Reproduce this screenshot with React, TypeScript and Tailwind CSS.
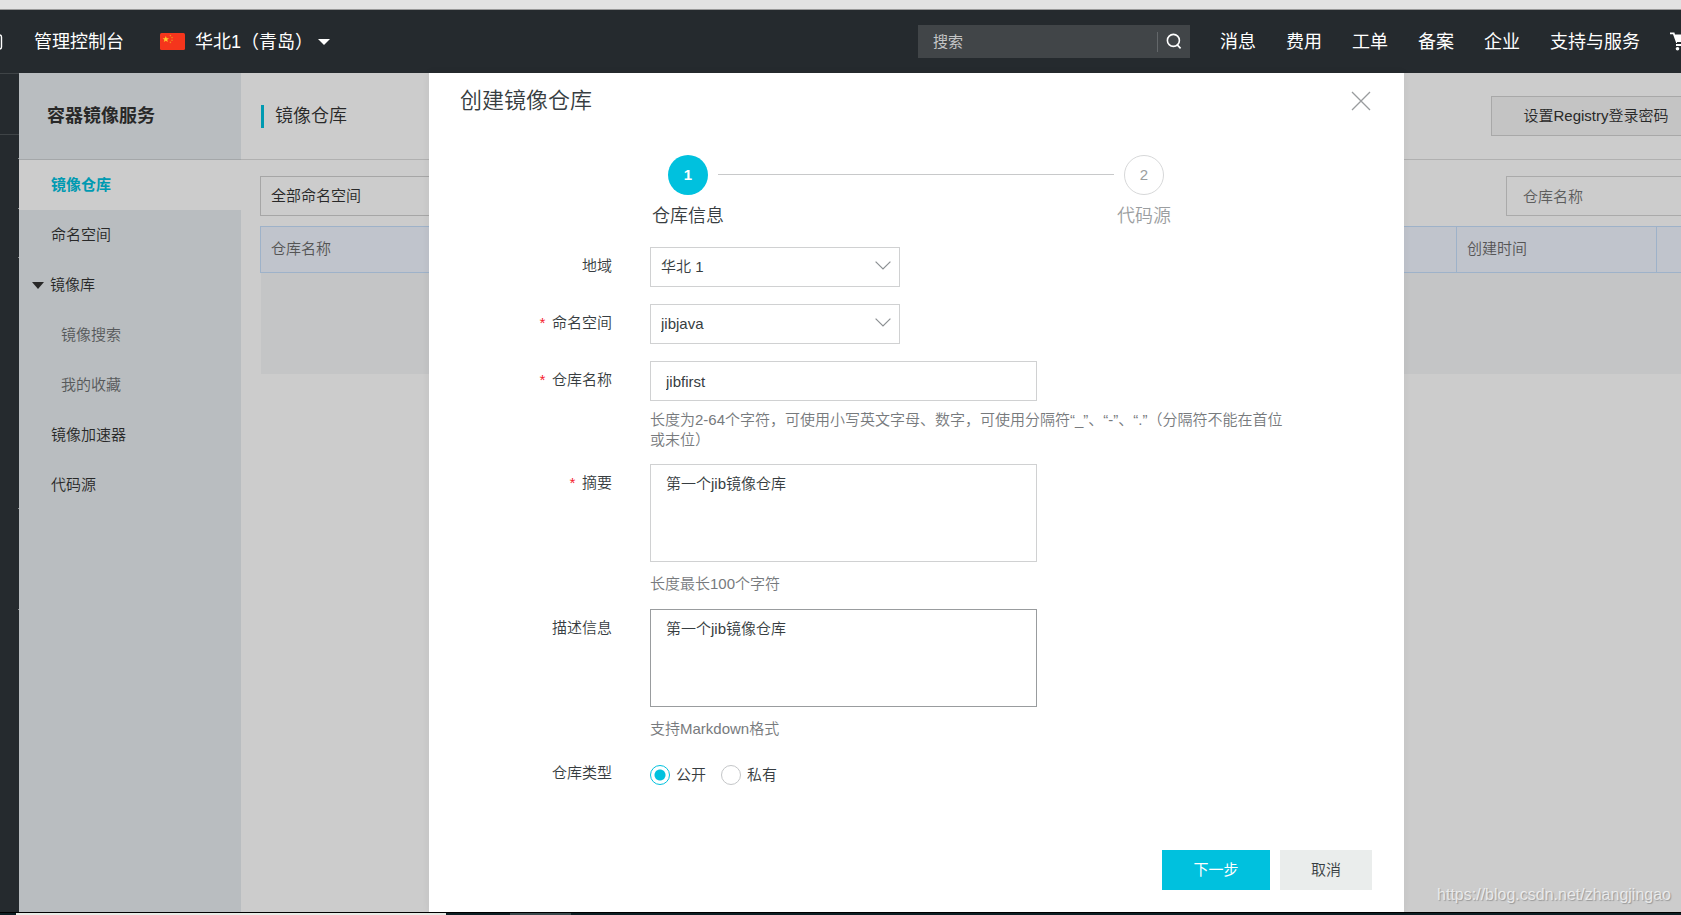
import { useState } from 'react';
import type { ReactNode } from 'react';
import clsx from 'clsx';

const NAV_LINKS = ['消息', '费用', '工单', '备案', '企业', '支持与服务'];

const MENU = [
  { label: '镜像仓库', kind: 'active' },
  { label: '命名空间', kind: 'item' },
  { label: '镜像库', kind: 'group' },
  { label: '镜像搜索', kind: 'sub' },
  { label: '我的收藏', kind: 'sub' },
  { label: '镜像加速器', kind: 'item' },
  { label: '代码源', kind: 'item' },
];

// Heights of the collapsed product rail cells
const RAIL_CELLS = ['h-6', 'h-[50px]', 'h-[49px]', 'h-[251px]', 'h-[101px]'];

function ChinaFlag() {
  return (
    <svg width="25" height="17" viewBox="0 0 25 17" aria-hidden="true">
      <rect width="25" height="17" rx="1.5" fill="#f5351c" />
      <path d="M5.8 3l.9 2.2 2.3.1-1.8 1.5.6 2.3-2-1.3-2 1.3.6-2.3-1.8-1.5 2.3-.1z" fill="#fdc72e" />
      <g fill="#f08a1e">
        <circle cx="10.4" cy="2.6" r=".8" />
        <circle cx="12" cy="4.6" r=".8" />
        <circle cx="12" cy="7.2" r=".8" />
        <circle cx="10.4" cy="9.4" r=".8" />
      </g>
    </svg>
  );
}

function SearchIcon() {
  return (
    <svg width="16" height="17" viewBox="0 0 16 17" fill="none" stroke="#fff" strokeWidth="1.6" aria-hidden="true">
      <circle cx="7.4" cy="7.4" r="6" />
      <path d="M11 11.6l3.6 3.8" />
    </svg>
  );
}

function CartIcon() {
  return (
    <svg width="24" height="19" viewBox="0 0 24 19" aria-hidden="true">
      <path d="M0 .6h4.4L5 2.6h18l-3 8.4H6.2L3 2.2H0z" fill="#fff" />
      <path d="M7 10.5h13" stroke="#252a2e" />
      <path d="M6 13h14" stroke="#fff" strokeWidth="2" />
      <circle cx="7.5" cy="16.7" r="1.8" fill="#fff" />
      <circle cx="18" cy="16.7" r="1.8" fill="#fff" />
    </svg>
  );
}

function Chevron() {
  return (
    <svg
      width="16"
      height="9"
      viewBox="0 0 16 9"
      fill="none"
      stroke="#8c9093"
      strokeWidth="1.2"
      className="pointer-events-none col-start-1 row-start-1 mr-[9px] mb-1 self-center justify-self-end"
      aria-hidden="true"
    >
      <path d="M.6.6L8 8 15.4.6" />
    </svg>
  );
}

function Header() {
  return (
    <header className="overflow-hidden border-t border-[#999] bg-[#252a2e] text-white">
      <div className="flex h-[63px] w-[calc(100%+13px)] items-center text-lg leading-7 whitespace-nowrap">
        <svg width="34" height="16" viewBox="0 0 34 16" fill="none" stroke="#fff" aria-hidden="true">
          <rect x="-12" y="1" width="13.5" height="14" rx="2" strokeWidth="1.4" />
        </svg>
        <a href="#console">管理控制台</a>
        <button type="button" className="ml-9 flex items-center">
          <ChinaFlag />
          <span className="ml-[10px]">华北1（青岛）</span>
          <svg width="12" height="6" viewBox="0 0 12 6" className="ml-[5px]" aria-hidden="true">
            <path d="M0 0h12L6 6z" fill="#fff" />
          </svg>
        </button>
        <div className="ml-auto flex items-center gap-[30px]">
          <form className="flex h-[33px] w-[272px] items-center bg-[#414548]">
            <input
              type="text"
              aria-label="搜索"
              placeholder="搜索"
              className="h-full min-w-0 flex-1 bg-transparent pl-[15px] text-[15px] outline-none placeholder:text-[#c4c5c6]"
            />
            <button
              type="button"
              aria-label="搜索"
              className="flex h-5 w-[33px] items-center justify-center border-l border-[#63676a]"
            >
              <SearchIcon />
            </button>
          </form>
          {NAV_LINKS.map((link) => (
            <a key={link} href="#nav">
              {link}
            </a>
          ))}
          <a href="#cart" aria-label="购物车">
            <CartIcon />
          </a>
        </div>
      </div>
    </header>
  );
}

function Rail() {
  return (
    <div className="w-[19px] shrink-0 bg-[#252a2e]">
      <div className="h-[62px] border-y border-[#3f4447]" />
      {RAIL_CELLS.map((height, i) => (
        <div key={i} className={clsx('flex items-end justify-end', height)}>
          <span className="h-px w-px bg-[#8d9092]" />
        </div>
      ))}
    </div>
  );
}

function Sidebar() {
  return (
    <nav className="w-[222px] shrink-0 bg-[#e8edf0] text-[15px] font-[350]">
      <h1 className="h-[87px] border-b border-[#cdd1d4] pl-7 text-lg leading-[87px] font-bold text-[#333]">
        容器镜像服务
      </h1>
      <ul>
        {MENU.map(({ label, kind }) => (
          <li key={label}>
            <a
              href="#menu"
              className={clsx(
                'flex h-[50px] items-center',
                kind === 'active' && 'bg-white pl-8 font-bold text-[#00c1de]',
                kind === 'item' && 'pl-8 text-[#333]',
                kind === 'group' && 'pl-[13px] text-[#333]',
                kind === 'sub' && 'pl-[42px] text-[#6d7072]',
              )}
            >
              {kind === 'group' && (
                <svg width="12" height="7" viewBox="0 0 12 7" className="mr-[6px]" aria-hidden="true">
                  <path d="M0 0h12L6 7z" fill="#333" />
                </svg>
              )}
              {label}
            </a>
          </li>
        ))}
      </ul>
    </nav>
  );
}

function Repositories() {
  return (
    <main className="min-w-0 flex-1 overflow-hidden bg-white text-[15px] font-[350]">
      <div className="w-[calc(100%+40px)]">
        <div className="flex h-[87px] items-center border-b border-[#ddd] px-5">
          <h2 className="flex items-center text-lg leading-6 text-[#333]">
            <span className="mr-[11px] h-[23px] w-[3px] bg-[#00c1de]" />
            镜像仓库
          </h2>
          <button type="button" className="ml-auto h-10 w-[210px] border border-[#d3d3d3] bg-[#f5f5f5] text-[#333]">
            设置Registry登录密码
          </button>
        </div>
        <div className="px-[19px] pt-4">
          <div className="flex justify-between">
            <select
              aria-label="命名空间筛选"
              className="h-10 w-[250px] appearance-none rounded-none border border-[#d0d0d0] bg-white pl-[10px] text-[#333]"
            >
              <option>全部命名空间</option>
            </select>
            <input
              type="text"
              aria-label="仓库名称筛选"
              placeholder="仓库名称"
              className="h-10 w-[196px] border border-[#d5d5d5] bg-white pl-4 placeholder:text-[#757575]"
            />
          </div>
          <table className="mt-[10px] w-full table-fixed border-collapse text-left text-[#6b6b6b]">
            <thead>
              <tr className="h-[46px] bg-[#f1f5ff]">
                <th className="border border-[#c6dffc] pl-[10px] font-[350]">仓库名称</th>
                <th className="w-[200px] border border-[#c6dffc] pl-[10px] font-[350]">创建时间</th>
                <th className="w-[45px] border border-[#c6dffc]" />
              </tr>
            </thead>
            <tbody>
              <tr className="h-[101px] bg-[#f6f7f8]">
                <td colSpan={3} />
              </tr>
            </tbody>
          </table>
        </div>
      </div>
    </main>
  );
}

function Step({ index, label, active }: { index: number; label: string; active?: boolean }) {
  return (
    <li
      className={clsx(
        'flex w-10 flex-col items-center text-lg leading-7 whitespace-nowrap',
        active ? 'text-[#373d41]' : 'text-[#9b9ea0]',
      )}
    >
      <span
        className={clsx(
          'mb-[7px] flex h-10 w-10 items-center justify-center rounded-full text-[15px]',
          active ? 'bg-[#00c1de] font-bold text-white' : 'border border-[#d7d8d9]',
        )}
      >
        {index}
      </span>
      {label}
    </li>
  );
}

interface FieldProps {
  id?: string;
  label: string;
  required?: boolean;
  className?: string;
  children: ReactNode;
}

function Field({ id, label, required, className, children }: FieldProps) {
  return (
    <div className={clsx('flex gap-[38px]', className)}>
      <label htmlFor={id} className="flex h-[39px] w-[183px] shrink-0 items-center justify-end gap-[5px]">
        {required && <span className="pt-1 font-['Liberation_Mono',monospace] leading-5 text-[#f5222d]">*</span>}
        {label}
      </label>
      <div className="min-w-0 flex-1">{children}</div>
    </div>
  );
}

function SelectBox({ id, options }: { id: string; options: string[] }) {
  return (
    <div className="grid w-[250px]">
      <select
        id={id}
        className="col-start-1 row-start-1 h-10 appearance-none rounded-none border border-[#d0d1d2] bg-white pl-[10px]"
      >
        {options.map((option) => (
          <option key={option}>{option}</option>
        ))}
      </select>
      <Chevron />
    </div>
  );
}

function CreateDialog() {
  const [name, setName] = useState('jibfirst');
  const [summary, setSummary] = useState('第一个jib镜像仓库');
  const [description, setDescription] = useState('第一个jib镜像仓库');
  const [type, setType] = useState('公开');

  return (
    <div
      role="dialog"
      aria-labelledby="dialog-title"
      className="flex flex-1 flex-col bg-white text-[15px] font-[350] text-[#373d41] shadow-[0_0_8px_rgba(0,0,0,0.06)]"
    >
      <div className="flex h-14 items-center justify-between pr-[33px] pl-[31px]">
        <h2 id="dialog-title" className="text-[22px] leading-8">
          创建镜像仓库
        </h2>
        <button type="button" aria-label="关闭">
          <svg width="20" height="20" viewBox="0 0 20 20" stroke="#999c9e" strokeWidth="1.3" aria-hidden="true">
            <path d="M1 1l18 18M19 1L1 19" />
          </svg>
        </button>
      </div>

      <ol className="mt-[26px] flex gap-[10px] pr-[240px] pl-[239px]">
        <Step index={1} label="仓库信息" active />
        <li aria-hidden="true" className="mt-[19px] h-px flex-1 bg-[#c8c9ca]" />
        <Step index={2} label="代码源" />
      </ol>

      <form className="mt-[17px] flex flex-1 flex-col">
        <Field id="region" label="地域" className="mb-[17px]">
          <SelectBox id="region" options={['华北 1']} />
        </Field>
        <Field id="namespace" label="命名空间" required className="mb-[17px]">
          <SelectBox id="namespace" options={['jibjava']} />
        </Field>
        <Field id="repo-name" label="仓库名称" required className="mb-[14px] pr-[114px]">
          <input
            id="repo-name"
            type="text"
            value={name}
            onChange={(e) => setName(e.target.value)}
            className="block h-10 w-[387px] border border-[#d0d1d2] px-[15px]"
          />
          <p className="mt-[9px] leading-5 text-[#777a7d] [text-spacing-trim:space-all]">
            长度为2-64个字符，可使用小写英文字母、数字，可使用分隔符“_”、“-”、“.”（分隔符不能在首位或末位）
          </p>
        </Field>
        <Field id="summary" label="摘要" required className="mb-[15px]">
          <textarea
            id="summary"
            value={summary}
            onChange={(e) => setSummary(e.target.value)}
            className="block h-[98px] w-[387px] resize-none border border-[#d0d1d2] px-[15px] py-[9px] leading-5"
          />
          <p className="mt-3 leading-5 text-[#777a7d]">长度最长100个字符</p>
        </Field>
        <Field id="description" label="描述信息" className="mb-[15px]">
          <textarea
            id="description"
            value={description}
            onChange={(e) => setDescription(e.target.value)}
            className="block h-[98px] w-[387px] resize-none border border-[#999c9e] px-[15px] py-[9px] leading-5"
          />
          <p className="mt-3 leading-5 text-[#777a7d]">支持Markdown格式</p>
        </Field>
        <Field label="仓库类型">
          <div className="flex h-[42px] items-center gap-[15px]">
            {['公开', '私有'].map((value) => (
              <label key={value} className="flex items-center gap-[6px]">
                <input
                  type="radio"
                  name="repo-type"
                  checked={type === value}
                  onChange={() => setType(value)}
                  className="h-5 w-5 appearance-none rounded-full border border-[#c4c6c8] checked:border-[#00c1de] checked:bg-[radial-gradient(#00c1de_5px,transparent_6px)]"
                />
                {value}
              </label>
            ))}
          </div>
        </Field>
        <div className="mt-auto flex justify-end gap-[10px] pt-8 pr-8 pb-[22px]">
          <button type="button" className="h-10 w-[108px] bg-[#00c1de] font-normal text-white">
            下一步
          </button>
          <button type="button" className="h-10 w-[92px] bg-[#eaedec]">
            取消
          </button>
        </div>
      </form>
    </div>
  );
}

export default function App() {
  return (
    <div className="flex min-h-screen flex-col bg-[#e2e2e2] pt-[9px] font-['Liberation_Sans','Noto_Sans_CJK_SC',sans-serif]">
      <Header />
      <div className="flex flex-1">
        <Rail />
        <div className="relative grid min-w-0 flex-1 grid-cols-1">
          <div className="col-start-1 row-start-1 flex min-w-0">
            <Sidebar />
            <Repositories />
          </div>
          <div className="z-10 col-start-1 row-start-1 flex min-w-0 bg-black/20 pr-[277px] pl-[410px]">
            <CreateDialog />
          </div>
          <span className="absolute right-[10px] bottom-[7px] z-20 text-base leading-5 text-white/70 [text-shadow:1px_1px_1px_rgba(0,0,0,0.25)]">
            https://blog.csdn.net/zhangjingao
          </span>
        </div>
      </div>
      <div className="flex h-[3px] border-t border-black bg-[#0e1f24]">
        <span className="ml-4 w-[430px] bg-[#e9ebe6]" />
        <span className="ml-16 w-[61px] bg-[#3b4b4e]" />
      </div>
    </div>
  );
}
